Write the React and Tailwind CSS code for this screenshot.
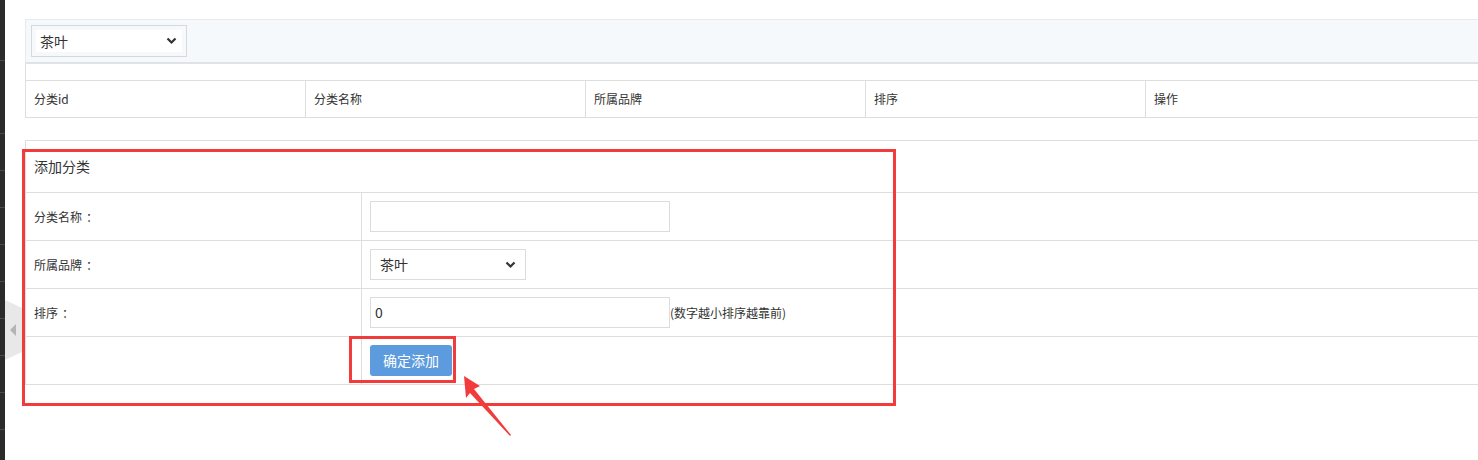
import React from 'react';

const font = { fontFamily: '"Microsoft YaHei", "Noto Sans CJK SC", "Noto Sans", sans-serif' };

const Chevron = ({ className }) => (
  <svg width="11" height="8" viewBox="0 0 11 8" className={className}>
    <path d="M1.5 1.5 L5.5 5.5 L9.5 1.5" fill="none" stroke="#333" strokeWidth="2.2" />
  </svg>
);

const SideStrip = () => {
  const gaps = [61, 73, 37, 37, 37, 37, 37, 37, 37, 37];
  return (
    <div className="w-[5px] h-full bg-[#2b2b2b] flex flex-col shrink-0">
      {gaps.map((g, i) => (
        <div key={i} style={{ height: g }} className="border-b border-[#4a4a4a] shrink-0" />
      ))}
    </div>
  );
};

const FormRow = ({ label, children }) => (
  <div className="flex h-[48px] border-b border-[#dedede]">
    <div className="w-[336px] shrink-0 border-r border-[#dedede] flex items-center pl-[8px] text-[12px] text-[#333]">
      {label && (
        <>
          {label}
          <span className="pl-[4px]">：</span>
        </>
      )}
    </div>
    <div className="flex-1 flex items-center pl-[8px]">{children}</div>
  </div>
);

export default function App() {
  const cols = ['分类id', '分类名称', '所属品牌', '排序'];
  return (
    <div className="relative w-[1478px] h-[460px] overflow-hidden bg-white flex" style={font}>
      <SideStrip />

      <div className="flex-1 pl-[20px] pt-[19px]">
        {/* filter bar */}
        <div className="h-[45px] bg-[#f5f9fc] border-t border-l border-[#e6ebf0] border-b-2 border-b-[#dfe3e8] pl-[5px] pt-[5px]">
          <div className="w-[156px] h-[32px] border border-[#d6d9dc] p-[4px]">
            <div className="h-full bg-white flex items-center justify-between pl-[4px] pr-[5px]">
              <span className="text-[14px] text-[#333]">茶叶</span>
              <Chevron />
            </div>
          </div>
        </div>

        {/* list table */}
        <div className="border-l border-[#dedede]">
          <div className="h-[17px] border-b border-[#dedede]" />
          <div className="flex h-[37px] border-b border-[#dedede] text-[12px] text-[#333]">
            {cols.map((c) => (
              <div key={c} className="w-[280px] shrink-0 border-r border-[#dedede] flex items-center pl-[8px]">
                {c}
              </div>
            ))}
            <div className="flex-1 flex items-center pl-[8px]">操作</div>
          </div>
        </div>

        {/* add form */}
        <div className="mt-[22px] border-t border-l border-[#dedede]">
          <div className="h-[52px] border-b border-[#dedede] flex items-center pl-[8px] text-[14px] text-[#333]">
            添加分类
          </div>
          <FormRow label="分类名称">
            <div className="w-[300px] h-[31px] border border-[#dcdcdc] bg-white" />
          </FormRow>
          <FormRow label="所属品牌">
            <div className="w-[156px] h-[31px] border border-[#dcdcdc] bg-white flex items-center justify-between pl-[9px] pr-[9px]">
              <span className="text-[14px] text-[#333]">茶叶</span>
              <Chevron />
            </div>
          </FormRow>
          <FormRow label="排序">
            <div className="w-[300px] h-[31px] border border-[#dcdcdc] bg-white flex items-center pl-[4px] text-[14px] text-[#333]">
              0
            </div>
            <span className="text-[12px] text-[#333]">(数字越小排序越靠前)</span>
          </FormRow>
          <FormRow label="">
            <button className="w-[82px] h-[31px] rounded-[3px] bg-[#5b9bde] text-white text-[14px]">确定添加</button>
          </FormRow>
        </div>
      </div>

      {/* collapse tab */}
      <svg className="absolute left-[5px] top-[300px]" width="17" height="60" viewBox="0 0 17 60">
        <polygon points="0,0 17,8 17,52 0,60" fill="#e8e8e8" />
        <polygon points="11,24 11,36 5,30" fill="#b4b4b4" />
      </svg>

      {/* annotation boxes */}
      <div className="absolute left-[22px] top-[149px] w-[874px] h-[257px] border-[3px] border-[#f23c3c]" />
      <div className="absolute left-[349px] top-[336px] w-[107px] h-[47px] border-[3px] border-[#f23c3c]" />
      <svg className="absolute left-[455px] top-[370px]" width="60" height="70" viewBox="0 0 60 70">
        <polygon points="9,6 25,16 19,19 56,65 55,66 15,23 11,28" fill="#f23c3c" />
      </svg>
    </div>
  );
}
